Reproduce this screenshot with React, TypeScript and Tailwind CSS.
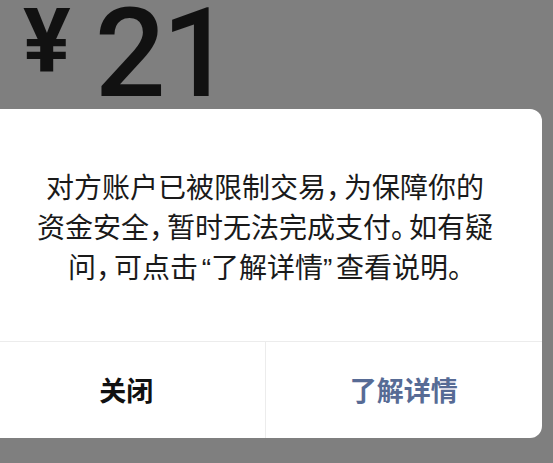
import React from "react";

export default function App() {
  return (
    <div className="w-[553px] h-[463px] bg-[#7f7f7f] overflow-hidden [font-family:'Noto_Sans_CJK_SC',sans-serif]">
      <div className="h-[109px] flex items-start pl-[23px] text-[#111111]">
        <span className="mt-[3px] text-[89px] font-bold leading-[0.85] [font-family:Roboto,'Noto_Sans_CJK_SC',sans-serif]">
          ¥
        </span>
        <span className="ml-[24px] mt-[1px] text-[125px] font-medium leading-[0.85] tracking-[-4px] [font-family:Roboto,sans-serif]">
          21
        </span>
      </div>
      <div className="ml-[-12px] w-[554px] h-[329px] bg-white rounded-[12px] flex flex-col">
        <div className="h-[232px] shrink-0 pt-[57px] text-center text-[28px] leading-[40px] text-[#1a1a1a] [font-feature-settings:'halt']">
          对方账户已被限制交易<span className="mr-[4px]">，</span>为保障你的
          <br />
          资金安全<span className="mr-[4px]">，</span>暂时无法完成支付<span className="mr-[4px]">。</span>如有疑
          <br />
          问<span className="mr-[4px]">，</span>可点击<span className="inline-block w-[13px] leading-none text-right [font-family:'Liberation_Sans',sans-serif]">“</span>了解详情<span className="inline-block w-[13px] leading-none text-left [font-family:'Liberation_Sans',sans-serif]">”</span>查看说明。
        </div>
        <div className="flex-1 flex border-t border-[#ececec]">
          <div className="flex-1 flex items-center justify-center text-[27px] font-bold text-[#111111]">
            关闭
          </div>
          <div className="w-px bg-[#ececec]" />
          <div className="flex-1 flex items-center justify-center text-[27px] font-bold text-[#576b95]">
            了解详情
          </div>
        </div>
      </div>
    </div>
  );
}
